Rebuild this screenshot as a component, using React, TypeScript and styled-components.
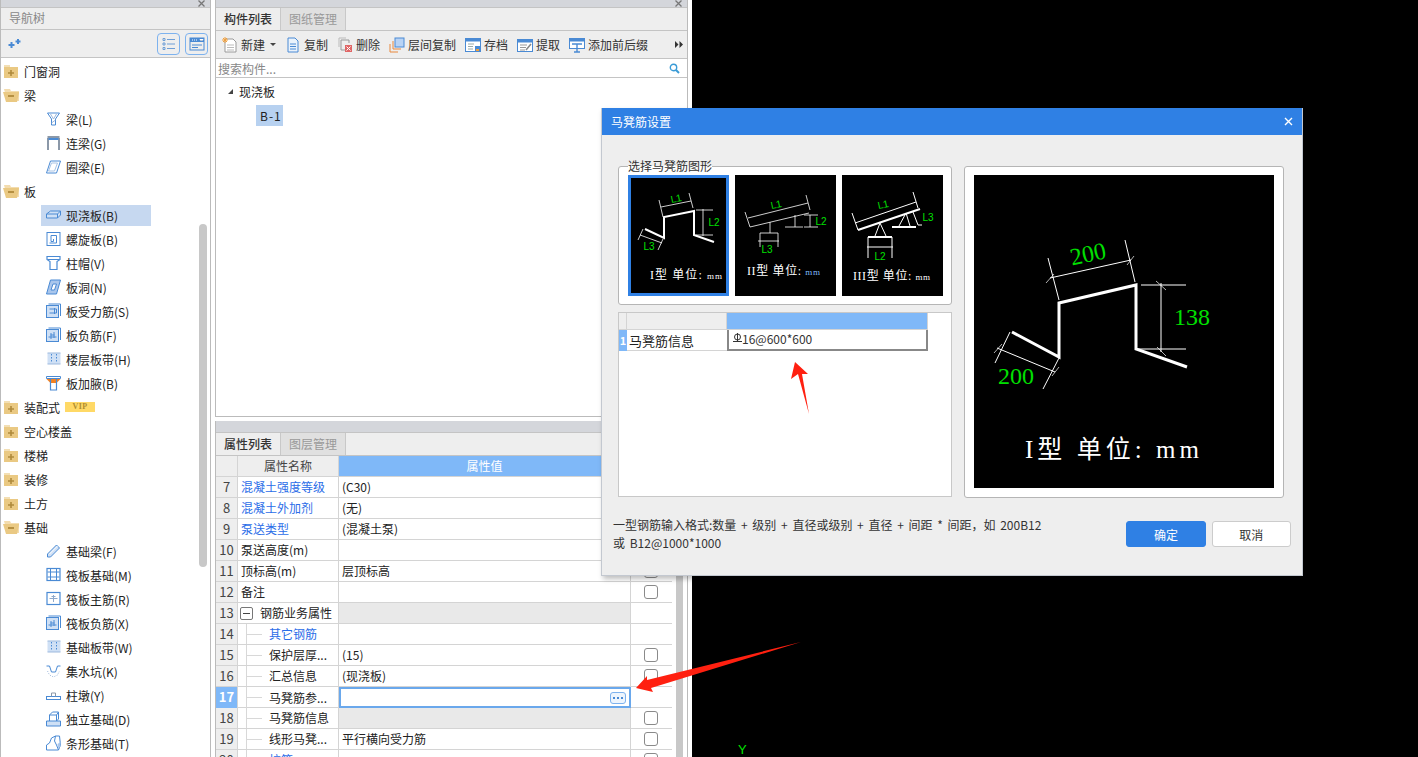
import React from 'react';
import styled, { createGlobalStyle } from 'styled-components';

const GlobalStyle = createGlobalStyle`
  html, body {
    margin: 0;
    height: 757px;
    overflow: hidden;
    background: #000;
  }
  * { box-sizing: border-box; }
  #root {
    font-family: "Noto Sans CJK SC", "Noto Sans", sans-serif;
    font-size: 12px;
    color: #222;
  }
`;

const BLUE = '#4a8ad4';
const PALE = '#cfe0f5';

const Page = styled.div`
  position: relative;
  display: flex;
  width: 1418px;
  height: 757px;
  overflow: hidden;
  background: #fff;
`;

const LeftPanel = styled.div`
  position: relative;
  width: 211px;
  height: 757px;
  border-left: 1px solid #bbb;
  border-right: 1px solid #bbb;
  background: #fff;
  overflow: hidden;
`;

const DragBar = styled.div<{ $h?: number }>`
  display: flex;
  justify-content: flex-end;
  align-items: center;
  height: ${p => (p.$h ?? 7) + 1}px;
  padding-right: 5px;
  background: #d4d6db;
  border-bottom: 1px solid #c4c4c4;
  overflow: hidden;
`;

const PanelTitle = styled.div`
  height: 22px;
  padding-left: 8px;
  line-height: 20px;
  background: #eee;
  border-bottom: 1px solid #c4c4c4;
  color: #888;
`;

const TreeBar = styled.div`
  display: flex;
  align-items: center;
  gap: 5px;
  height: 28px;
  padding: 0 2px 0 7px;
  background: #eee;
  border-bottom: 1px solid #c4c4c4;
`;

const ViewButton = styled.div`
  display: flex;
  align-items: center;
  justify-content: center;
  width: 23px;
  height: 22px;
  border: 1px solid #7db2ee;
  border-radius: 4px;
  &:first-of-type { margin-left: auto; }
`;

const Tree = styled.div`
  padding-top: 1px;
`;

const GroupRow = styled.div`
  display: flex;
  align-items: center;
  gap: 5px;
  height: 24px;
  padding-left: 2px;
  color: #222;
`;

const ChildRow = styled.div`
  display: flex;
  align-items: center;
  height: 24px;
  padding-left: 40px;
`;

const ChildBox = styled.div<{ $active?: boolean }>`
  display: flex;
  align-items: center;
  gap: 4px;
  width: 110px;
  height: 21px;
  padding-left: 4px;
  background: ${p => (p.$active ? '#c6d8f0' : 'transparent')};
  white-space: nowrap;
`;

const VipBadge = styled.span`
  width: 30px;
  height: 10px;
  background: #ffd966;
  color: #b08d2e;
  font: bold 8px/10px "Liberation Serif", serif;
  letter-spacing: 0.5px;
  text-align: center;
`;

const ScrollThumb = styled.div`
  position: absolute;
  left: 198px;
  top: 224px;
  width: 8px;
  height: 343px;
  border-radius: 4px;
  background: #c8c8c8;
`;

const MiddleColumn = styled.div`
  display: flex;
  flex-direction: column;
  width: 473px;
  margin-left: 4px;
  background: #fff;
`;

const UpperPanel = styled.div`
  height: 417px;
  border: 1px solid #bbb;
  border-top: none;
`;

const LowerPanel = styled.div`
  flex: 1;
  margin-top: 4px;
  border-left: 1px solid #bbb;
  border-right: 1px solid #bbb;
  overflow: hidden;
`;

const TabStrip = styled.div`
  display: flex;
  height: 23px;
  background: #eee;
  border-bottom: 1px solid #c4c4c4;
`;

const Tab = styled.div<{ $active?: boolean }>`
  width: 65px;
  text-align: center;
  line-height: 22px;
  font-weight: ${p => (p.$active ? 500 : 400)};
  color: ${p => (p.$active ? '#333' : '#999')};
  background: ${p => (p.$active ? '#eee' : '#e0e0e0')};
  border-right: 1px solid #c8c8c8;
`;

const Toolbar = styled.div`
  display: flex;
  align-items: center;
  gap: 9px;
  height: 28px;
  padding: 0 4px 0 6px;
  background: #eee;
  border-bottom: 1px solid #c4c4c4;
`;

const ToolItem = styled.div`
  display: flex;
  align-items: center;
  gap: 3px;
  color: #333;
  white-space: nowrap;
`;

const Caret = styled.span`
  width: 0;
  height: 0;
  margin-left: 2px;
  border-left: 3px solid transparent;
  border-right: 3px solid transparent;
  border-top: 3px solid #444;
`;

const MoreArrows = styled.svg`
  margin-left: auto;
`;

const SearchBar = styled.div`
  display: flex;
  align-items: center;
  justify-content: space-between;
  height: 19px;
  padding: 0 7px 0 2px;
  border-bottom: 1px solid #c4c4c4;
  color: #888;
`;

const ListTree = styled.div`
  padding-top: 1px;
`;

const ListRow = styled.div`
  display: flex;
  align-items: center;
  gap: 6px;
  height: 24px;
  padding-left: 12px;
`;

const Triangle = styled.span`
  width: 0;
  height: 0;
  border-left: 5px solid transparent;
  border-bottom: 5px solid #444;
`;

const ListLeaf = styled.div`
  display: flex;
  align-items: center;
  width: 27px;
  height: 21px;
  margin: 2px 0 0 40px;
  padding-left: 4px;
  letter-spacing: 1px;
  background: #b7d1f0;
`;

const TableArea = styled.div`
  display: flex;
`;

const Table = styled.div`
  width: 456px;
  flex: none;
`;

const Scrollbar = styled.div`
  width: 7px;
  height: 301px;
  margin-left: 4px;
  background: #c8c8c8;
`;

const TableRow = styled.div`
  display: grid;
  grid-template-columns: 22px 101px 292px 41px;
  height: 21px;
  line-height: 20px;
  border-bottom: 1px solid #d4d4d4;
`;

const NumCell = styled.div<{ $active?: boolean }>`
  text-align: center;
  font-size: 13px;
  font-weight: ${p => (p.$active ? 700 : 400)};
  color: ${p => (p.$active ? '#fff' : '#444')};
  background: ${p => (p.$active ? '#7fb8f8' : '#eee')};
  border-right: 1px solid #d4d4d4;
`;

const HeadCell = styled.div<{ $active?: boolean }>`
  text-align: center;
  color: ${p => (p.$active ? '#fff' : '#444')};
  background: ${p => (p.$active ? '#7fb8f8' : '#eee')};
  border-right: 1px solid #d4d4d4;
`;

const NameCell = styled.div<{ $link?: boolean; $indent?: boolean }>`
  position: relative;
  display: flex;
  align-items: center;
  gap: 7px;
  padding-left: ${p => (p.$indent ? 31 : 3)}px;
  color: ${p => (p.$link ? '#2b6de8' : '#222')};
  border-right: 1px solid #d4d4d4;
  white-space: nowrap;
  overflow: hidden;
  ${p =>
    p.$indent &&
    `
    &::before {
      content: '';
      position: absolute;
      left: 8px;
      top: 0;
      bottom: 0;
      border-left: 1px solid #d8d8d8;
    }
    &::after {
      content: '';
      position: absolute;
      left: 9px;
      top: 10px;
      width: 15px;
      border-top: 1px solid #d8d8d8;
    }
  `}
`;

const MinusBox = styled.span`
  display: flex;
  align-items: center;
  justify-content: center;
  width: 13px;
  height: 13px;
  margin-left: -1px;
  border: 1px solid #777;
  border-radius: 2px;
  &::before {
    content: '';
    width: 7px;
    border-top: 1px solid #444;
  }
`;

const ValueCell = styled.div<{ $shaded?: boolean }>`
  padding-left: 3px;
  background: ${p => (p.$shaded ? '#e9e9e9' : '#fff')};
  border-right: 1px solid #d4d4d4;
  color: #222;
`;

const EditingCell = styled.div`
  display: flex;
  align-items: center;
  justify-content: flex-end;
  height: 21px;
  padding-right: 3px;
  border: 2px solid #6aa8ec;
  background: #fff;
`;

const DotsButton = styled.span`
  display: flex;
  align-items: center;
  justify-content: center;
  gap: 2px;
  width: 16px;
  height: 12px;
  border: 1px solid #7db2ee;
  border-radius: 3px;
  background: #eef5fd;
  i {
    width: 2px;
    height: 2px;
    background: #4a8ad4;
  }
`;

const CheckCell = styled.div`
  display: flex;
  align-items: center;
  justify-content: center;
  padding-right: 1px;
`;

const CheckBox = styled.span`
  width: 14px;
  height: 14px;
  border: 1px solid #8a8a8a;
  border-radius: 3px;
  background: #fff;
`;

const Canvas = styled.div`
  position: relative;
  flex: 1;
  margin-left: 4px;
  background: #000;
`;

const AxisLabel = styled.span`
  position: absolute;
  left: 46px;
  top: 743px;
  color: #00e000;
  font: 13px/14px "Liberation Sans", sans-serif;
`;

const Dialog = styled.div`
  position: absolute;
  left: 601px;
  top: 108px;
  width: 702px;
  height: 468px;
  background: #eee;
  border: 1px solid #c3c8d0;
  border-top: none;
  box-shadow: 2px 3px 5px rgba(0, 0, 0, 0.25);
`;

const DialogTitle = styled.div`
  display: flex;
  align-items: center;
  justify-content: space-between;
  height: 27px;
  padding: 0 9px;
  background: #2f80e4;
  color: #fff;
`;

const DialogBody = styled.div`
  display: flex;
  gap: 12px;
  padding: 31px 0 0 16px;
`;

const DialogLeft = styled.div`
  display: flex;
  flex-direction: column;
  gap: 7px;
  width: 334px;
`;

const GroupBox = styled.div`
  position: relative;
  display: flex;
  gap: 6px;
  height: 139px;
  padding: 8px 9px;
  background: #fff;
  border: 1px solid #b5b5b5;
  border-radius: 3px;
`;

const GroupLegend = styled.span`
  position: absolute;
  left: 9px;
  top: -8px;
  line-height: 14px;
  color: #333;
  background: linear-gradient(#eee 50%, #fff 50%);
`;

const ShapeTile = styled.div<{ $selected?: boolean }>`
  width: 101px;
  height: 121px;
  background: #000;
  border: 3px solid ${p => (p.$selected ? '#2f80e4' : '#000')};
`;

const InfoGrid = styled.div`
  height: 185px;
  background: #fff;
  border: 1px solid #c8c8c8;
`;

const InfoRow = styled.div`
  display: grid;
  grid-template-columns: 8px 100px 201px;
  width: 309px;
`;

const InfoHead = styled.div<{ $blue?: boolean }>`
  height: 17px;
  background: ${p => (p.$blue ? '#7fb8f8' : '#eee')};
  border-right: 1px solid #d4d4d4;
  border-bottom: 1px solid #d4d4d4;
`;

const InfoNum = styled.div`
  height: 21px;
  background: #7fb8f8;
  color: #fff;
  font-size: 11px;
  font-weight: 700;
  line-height: 20px;
  text-align: center;
`;

const InfoName = styled.div`
  height: 21px;
  padding-left: 2px;
  font-size: 13px;
  line-height: 21px;
  border-bottom: 1px solid #d4d4d4;
`;

const InfoValue = styled.div`
  display: flex;
  align-items: center;
  height: 21px;
  padding: 0 0 2px 4px;
  color: #333;
  border: 2px solid #888;
  border-top: none;
`;

const PreviewBox = styled.div`
  width: 320px;
  height: 332px;
  padding: 8px 9px;
  background: #fff;
  border: 1px solid #b5b5b5;
  border-radius: 3px;
`;

const PreviewScreen = styled.svg`
  display: block;
  width: 300px;
  height: 313px;
  background: #000;
`;

const DialogFooter = styled.div`
  display: flex;
  gap: 6px;
  padding: 23px 11px 0 11px;
`;

const HelpText = styled.div`
  width: 511px;
  margin-top: -5px;
  line-height: 18px;
  word-spacing: 2px;
  color: #333;
`;

const DialogButton = styled.div<{ $primary?: boolean }>`
  width: 80px;
  height: 26px;
  line-height: 26px;
  text-align: center;
  border-radius: 3px;
  color: ${p => (p.$primary ? '#fff' : '#333')};
  background: ${p => (p.$primary ? '#2f80e4' : '#fff')};
  border: 1px solid ${p => (p.$primary ? '#2f80e4' : '#ccc')};
`;

const ArrowLayer = styled.svg`
  position: absolute;
  left: 0;
  top: 0;
  width: 1418px;
  height: 757px;
  pointer-events: none;
`;

const FolderClosed = () => (
  <svg width="16" height="14" viewBox="0 0 16 14">
    <path d="M1 1h6v2H1z" fill="#f3dfb4" />
    <rect x="1" y="3" width="14" height="11" fill="#eac983" />
    <path d="M8 6v6M5 9h6" stroke="#b08a3c" strokeWidth="1.6" />
  </svg>
);

const FolderOpen = () => (
  <svg width="16" height="14" viewBox="0 0 16 14">
    <path d="M1 1h6l1 2h8v10H4z" fill="#f3dcae" />
    <path d="M0 4h16v1l-2 9H3z" fill="#eac983" />
    <path d="M5 8h6" stroke="#a98232" strokeWidth="1.6" />
  </svg>
);

const CloseMark = () => (
  <svg width="7" height="7" viewBox="0 0 7 7">
    <path d="M0.500 0.500l6 6M6.500 0.500l-6 6" stroke="#777" strokeWidth="1.300" />
  </svg>
);

const s = { fill: 'none', stroke: BLUE, strokeWidth: 1 };

const icons: Record<string, React.ReactNode> = {
  beam: (
    <>
      <path d="M2 2h12l-4 6v6H6V8z" {...s} />
      <path d="M5 3l3 5 3-5M6 12l4-3" stroke="#9db9dd" fill="none" />
    </>
  ),
  link: (
    <>
      <path d="M2.500 3v12M13.500 3v12" stroke="#8b98a8" strokeWidth="2" />
      <rect x="2" y="1" width="12" height="2" fill="#8b98a8" />
      <rect x="3" y="3" width="10" height="2" fill={BLUE} />
    </>
  ),
  ring: (
    <>
      <path d="M5 2h10l-4 12H1z" {...s} />
      <path d="M6 4h6l-3 8H3z" fill="none" stroke="#a9c4e6" />
    </>
  ),
  slab: (
    <>
      <path d="M1 7l4-3h10v4l-3 3H1z" fill={PALE} stroke={BLUE} />
      <path d="M1 7h11l3-3M12 7v4" {...s} />
    </>
  ),
  spiral: (
    <>
      <rect x="1.500" y="1.500" width="13" height="13" {...s} />
      <path d="M8 8v2.500H5.500V4.500h5.500v7.500H4" {...s} />
    </>
  ),
  cap: (
    <>
      <path d="M1.500 1.500h13v3l-3 2v8h-7v-8l-3-2z" fill="none" stroke={BLUE} strokeWidth="1.200" />
      <path d="M2 4.500h12" {...s} />
    </>
  ),
  hole: (
    <>
      <path d="M5 1h10l-4 14H1z" fill="#a9c6ec" stroke={BLUE} />
      <path d="M7.500 5h3.500L9 11H5.500z" fill="#fff" stroke={BLUE} />
    </>
  ),
  force: (
    <>
      <path d="M3 1h12v12" {...s} />
      <rect x="1" y="2.500" width="12" height="12" fill={PALE} stroke={BLUE} />
      <path d="M4 6h7M4 10h7M9 5v6M11 6v4" {...s} />
    </>
  ),
  negative: (
    <>
      <path d="M3 1h12v12" {...s} />
      <rect x="1" y="2.500" width="12" height="12" fill={PALE} stroke={BLUE} />
      <path d="M3 10h8M5.500 6v6M8.500 5v6M5 8h4" {...s} />
    </>
  ),
  strip: (
    <>
      <rect x="2" y="2" width="13" height="11" fill={PALE} />
      <path d="M2 2h13M2 13h13" stroke="#9db9dd" />
      <path d="M6 3v9M11 3v9" stroke={BLUE} strokeDasharray="1.500 1.500" />
    </>
  ),
  haunch: (
    <>
      <path d="M1 1.500h14v2H1z" fill="none" stroke={BLUE} />
      <path d="M1 4h14l-4 4H5z" fill="#f58220" />
      <path d="M5 4v11h6V4" fill="none" stroke={BLUE} strokeWidth="1.200" />
    </>
  ),
  foundBeam: (
    <>
      <path d="M2 11L11 2l3 3-9 9H2z" fill={PALE} stroke={BLUE} />
      <path d="M4 11l8-8" stroke="#fff" />
    </>
  ),
  raft: (
    <>
      <rect x="1.500" y="1.500" width="13" height="12" fill="none" stroke={BLUE} strokeWidth="1.200" />
      <rect x="5" y="5" width="6" height="5" fill="none" stroke={BLUE} />
      <path d="M2 5h3M11 5h3M2 10h3M11 10h3M5 2v3M11 2v3M5 10v3M11 10v3" stroke={BLUE} />
    </>
  ),
  raftMain: (
    <>
      <rect x="1.500" y="1.500" width="13" height="12" fill="none" stroke={BLUE} strokeWidth="1.200" />
      <path d="M8 4v7M4 7.500h8M6 5.500h4" stroke="#8ea9cc" fill="none" />
    </>
  ),
  pit: (
    <>
      <path d="M1 3h3l2 6h4l2-6h3" {...s} />
      <path d="M2 8l2 4 4 2 4-2 2-4" stroke="#9db9dd" strokeDasharray="1 1.500" fill="none" />
    </>
  ),
  pier: (
    <>
      <rect x="1" y="9.500" width="14" height="3" fill="none" stroke={BLUE} />
      <path d="M6 9.500V6h4v3.500" fill="none" stroke="#8b98a8" />
    </>
  ),
  isolated: (
    <>
      <path d="M1 10h14v5H1z" fill={PALE} stroke={BLUE} />
      <path d="M4 10V4l3-3h6v7l-2 2" fill="none" stroke={BLUE} />
      <path d="M4 4h7v6" fill="none" stroke={BLUE} />
      <path d="M11 4l2-3" stroke={BLUE} />
    </>
  ),
  strip3d: (
    <>
      <path d="M1 15V10l3-2 2-5 4-2h4l1 9-2 5z" fill="none" stroke={BLUE} />
      <path d="M10 1l-1 5 2 4 2 5" fill="none" stroke={BLUE} />
      <path d="M12 9l3-2v4l-2 3z" fill="#a9c6ec" />
    </>
  ),
};

const NavIcon: React.FC<{ name: string }> = ({ name }) => (
  <svg width="17" height="16" viewBox="0 0 16 16" style={{ flex: 'none' }}>
    {icons[name]}
  </svg>
);

const ToolIcon: React.FC<{ children: React.ReactNode }> = ({ children }) => (
  <svg width="16" height="16" viewBox="0 0 16 16">
    {children}
  </svg>
);

type NavNode =
  | { kind: 'group'; label: string; open?: boolean; vip?: boolean }
  | { kind: 'child'; label: string; icon: string; active?: boolean };

const navNodes: NavNode[] = [
  { kind: 'group', label: '门窗洞' },
  { kind: 'group', label: '梁', open: true },
  { kind: 'child', label: '梁(L)', icon: 'beam' },
  { kind: 'child', label: '连梁(G)', icon: 'link' },
  { kind: 'child', label: '圈梁(E)', icon: 'ring' },
  { kind: 'group', label: '板', open: true },
  { kind: 'child', label: '现浇板(B)', icon: 'slab', active: true },
  { kind: 'child', label: '螺旋板(B)', icon: 'spiral' },
  { kind: 'child', label: '柱帽(V)', icon: 'cap' },
  { kind: 'child', label: '板洞(N)', icon: 'hole' },
  { kind: 'child', label: '板受力筋(S)', icon: 'force' },
  { kind: 'child', label: '板负筋(F)', icon: 'negative' },
  { kind: 'child', label: '楼层板带(H)', icon: 'strip' },
  { kind: 'child', label: '板加腋(B)', icon: 'haunch' },
  { kind: 'group', label: '装配式', vip: true },
  { kind: 'group', label: '空心楼盖' },
  { kind: 'group', label: '楼梯' },
  { kind: 'group', label: '装修' },
  { kind: 'group', label: '土方' },
  { kind: 'group', label: '基础', open: true },
  { kind: 'child', label: '基础梁(F)', icon: 'foundBeam' },
  { kind: 'child', label: '筏板基础(M)', icon: 'raft' },
  { kind: 'child', label: '筏板主筋(R)', icon: 'raftMain' },
  { kind: 'child', label: '筏板负筋(X)', icon: 'negative' },
  { kind: 'child', label: '基础板带(W)', icon: 'strip' },
  { kind: 'child', label: '集水坑(K)', icon: 'pit' },
  { kind: 'child', label: '柱墩(Y)', icon: 'pier' },
  { kind: 'child', label: '独立基础(D)', icon: 'isolated' },
  { kind: 'child', label: '条形基础(T)', icon: 'strip3d' },
];

interface PropRow {
  n: number;
  name: string;
  value?: string;
  link?: boolean;
  indent?: boolean;
  shaded?: boolean;
  check?: boolean;
  group?: boolean;
  editing?: boolean;
}

const propRows: PropRow[] = [
  { n: 7, name: '混凝土强度等级', value: '(C30)', link: true, check: true },
  { n: 8, name: '混凝土外加剂', value: '(无)', link: true, check: true },
  { n: 9, name: '泵送类型', value: '(混凝土泵)', link: true, check: true },
  { n: 10, name: '泵送高度(m)', check: true },
  { n: 11, name: '顶标高(m)', value: '层顶标高', check: true },
  { n: 12, name: '备注', check: true },
  { n: 13, name: '钢筋业务属性', group: true, shaded: true },
  { n: 14, name: '其它钢筋', link: true, indent: true },
  { n: 15, name: '保护层厚...', value: '(15)', indent: true, check: true },
  { n: 16, name: '汇总信息', value: '(现浇板)', indent: true, check: true },
  { n: 17, name: '马凳筋参...', indent: true, editing: true },
  { n: 18, name: '马凳筋信息', indent: true, shaded: true, check: true },
  { n: 19, name: '线形马凳...', value: '平行横向受力筋', indent: true, check: true },
  { n: 20, name: '拉筋', link: true, indent: true, check: true },
];

const thin = { stroke: '#fff', strokeWidth: 1, fill: 'none' };
const thick = { stroke: '#fff', strokeWidth: 2, fill: 'none' };
const dimText = { fill: '#00e000', fontFamily: '"Liberation Sans", sans-serif', fontSize: 10, textAnchor: 'middle' as const };
const tileLabel = { fill: '#fff', fontFamily: '"Liberation Serif", "Noto Sans CJK SC", serif', fontSize: 12 };
const previewDim = { fill: '#00e000', fontFamily: '"Liberation Serif", serif', fontSize: 24, textAnchor: 'middle' as const };

const TileOne = () => (
  <svg width="95" height="115" viewBox="3 3 95 115" style={{ display: 'block' }}>
    <path d="M17 54L36 63V42L66 36V60L86 67" {...thick} />
    <path d="M31 25L35 42M61 18L65 33M33 32L63 26M68 35H85M68 60H85M75 34V61M15 54L10 65M35 64L30 75M12 60L34 68" {...thin} strokeWidth={0.8} />
    <text x="48" y="27" {...dimText} transform="rotate(-12 48 23)">L1</text>
    <text x="86" y="51" {...dimText}>L2</text>
    <text x="21" y="75" {...dimText}>L3</text>
    <text x="22" y="104" {...tileLabel} textLength={72}>I型 单位: <tspan fontSize="9">mm</tspan></text>
  </svg>
);

const TileTwo = () => (
  <svg width="95" height="115" viewBox="3 3 95 115" style={{ display: 'block' }}>
    <path d="M10 37L15 52M71 20L75 35M13 43L73 28M15 52L74 38M35 47V58M25 58H43M25 58V72M43 58V72M23 66H44M60 40V52M50 52H68M69 52H83M69 40H83M75 40V52" {...thin} strokeWidth={0.8} />
    <text x="41" y="33" {...dimText} transform="rotate(-12 41 29)">L1</text>
    <text x="86" y="50" {...dimText}>L2</text>
    <text x="32" y="78" {...dimText}>L3</text>
    <text x="12" y="100" {...tileLabel} textLength={73}>II型 单位: <tspan fontSize="9" fill="#7fb8f8">mm</tspan></text>
  </svg>
);

const TileThree = () => (
  <svg width="95" height="115" viewBox="3 3 95 115" style={{ display: 'block' }}>
    <path d="M16 55L78 34M50 52H74M26 62H50" {...thick} />
    <path d="M13 48L74 27M10 38L16 55M71 17L76 33M64 38L57 51M64 38L68 51M38 48L33 61M38 48L44 61M26 62V83M50 62V83M25 72H51M71 37L76 50M76 50H80" {...thin} />
    <text x="41" y="33" {...dimText} transform="rotate(-12 41 29)">L1</text>
    <text x="86" y="46" {...dimText}>L3</text>
    <text x="38" y="85" {...dimText}>L2</text>
    <text x="11" y="105" {...tileLabel} textLength={77}>III型 单位: <tspan fontSize="9">mm</tspan></text>
  </svg>
);

const RebarGlyph = () => (
  <svg width="9" height="11" viewBox="0 0 9 11">
    <circle cx="4.500" cy="4" r="3" fill="none" stroke="#333" />
    <path d="M4.500 0V8M0 8.500H9" stroke="#333" />
  </svg>
);

export default function App() {
  return (
    <Page>
      <GlobalStyle />
      <LeftPanel>
        <DragBar>
          <CloseMark />
        </DragBar>
        <PanelTitle>导航树</PanelTitle>
        <TreeBar>
          <svg width="14" height="12" viewBox="0 0 14 12">
            <path d="M3.500 4v6M0.500 7h6M10 1v5M7.500 3.500h5" stroke={BLUE} strokeWidth="2" />
          </svg>
          <ViewButton>
            <svg width="14" height="14" viewBox="0 0 14 14">
              <path d="M5 2.500h8M5 7h8M5 11.500h8" stroke="#6e9ed6" />
              <path d="M1 1.500h2v2H1zM1 6h2v2H1zM1 10.500h2v2H1z" fill="none" stroke="#6e9ed6" />
            </svg>
          </ViewButton>
          <ViewButton>
            <svg width="16" height="14" viewBox="0 0 16 14">
              <rect x="1" y="1" width="14" height="12" fill="none" stroke={BLUE} />
              <rect x="1" y="1" width="14" height="4" fill={BLUE} />
              <path d="M3 8h10M3 10.500h6" stroke={BLUE} />
              <path d="M3 3h1M5 3h1M7 3h1M11 2.500h3l-1.500 1.500z" stroke="#fff" />
            </svg>
          </ViewButton>
        </TreeBar>
        <Tree>
          {navNodes.map(node =>
            node.kind === 'group' ? (
              <GroupRow key={node.label}>
                {node.open ? <FolderOpen /> : <FolderClosed />}
                <span>{node.label}</span>
                {node.vip && <VipBadge>VIP</VipBadge>}
              </GroupRow>
            ) : (
              <ChildRow key={node.label}>
                <ChildBox $active={node.active}>
                  <NavIcon name={node.icon} />
                  <span>{node.label}</span>
                </ChildBox>
              </ChildRow>
            ),
          )}
        </Tree>
        <ScrollThumb />
      </LeftPanel>

      <MiddleColumn>
        <UpperPanel>
          <DragBar>
            <CloseMark />
          </DragBar>
          <TabStrip>
            <Tab $active>构件列表</Tab>
            <Tab>图纸管理</Tab>
          </TabStrip>
          <Toolbar>
            <ToolItem>
              <ToolIcon>
                <path d="M3 2h8l3 3v10H3z" fill="#fff" stroke="#999" />
                <path d="M5 8h7M5 10.500h7M5 13h7" stroke="#bbb" />
                <path d="M3 0v6M0 3h6M1 1l4 4M5 1l-4 4" stroke="#f2a03c" />
              </ToolIcon>
              新建
              <Caret />
            </ToolItem>
            <ToolItem>
              <ToolIcon>
                <path d="M3 1h7l3 3v11H3z" fill="#eaf2fb" stroke={BLUE} />
                <path d="M5 7h6M5 9.500h6M5 12h6" stroke={BLUE} />
              </ToolIcon>
              复制
            </ToolItem>
            <ToolItem>
              <ToolIcon>
                <path d="M4 3h8v3M4 3v10h4" fill="none" stroke="#999" />
                <path d="M2 1h7M2 1v9" fill="none" stroke="#bbb" />
                <rect x="8" y="8" width="7" height="7" fill="#e06666" />
                <path d="M9.500 9.500l4 4M13.500 9.500l-4 4" stroke="#fff" />
              </ToolIcon>
              删除
            </ToolItem>
            <ToolItem>
              <ToolIcon>
                <rect x="6" y="1" width="9" height="9" fill="#b8d3f5" stroke={BLUE} />
                <path d="M4 4v8h8M1 7v8h8" fill="none" stroke="#e8883c" />
              </ToolIcon>
              层间复制
            </ToolItem>
            <ToolItem>
              <ToolIcon>
                <rect x="0.500" y="1.500" width="15" height="13" fill="#fff" stroke={BLUE} />
                <rect x="0.500" y="1.500" width="15" height="3" fill={BLUE} />
                <path d="M3 7h6M3 9.500h5M3 12h5" stroke="#9aa" />
                <rect x="10" y="9" width="5" height="5" fill={BLUE} />
                <rect x="11" y="12" width="3" height="2" fill="#f2a03c" />
              </ToolIcon>
              存档
            </ToolItem>
            <ToolItem>
              <ToolIcon>
                <rect x="0.500" y="2.500" width="15" height="12" fill="#fff" stroke={BLUE} />
                <rect x="0.500" y="2.500" width="15" height="3" fill={BLUE} />
                <path d="M3 8h7M3 10.500h6M3 13h5" stroke="#999" />
                <path d="M9 13l5-6" stroke="#888" strokeWidth="1.500" />
              </ToolIcon>
              提取
            </ToolItem>
            <ToolItem>
              <ToolIcon>
                <rect x="0.500" y="1.500" width="15" height="10" fill="#fff" stroke={BLUE} />
                <rect x="0.500" y="1.500" width="15" height="3" fill={BLUE} />
                <path d="M3 7h10M8 7v8M5 15h6" stroke={BLUE} strokeWidth="1.400" />
              </ToolIcon>
              添加前后缀
            </ToolItem>
            <MoreArrows width="8" height="7" viewBox="0 0 8 7">
              <path d="M0 0l3.500 3.500L0 7zM4.500 0L8 3.500 4.500 7z" fill="#333" />
            </MoreArrows>
          </Toolbar>
          <SearchBar>
            搜索构件...
            <svg width="11" height="11" viewBox="0 0 11 11">
              <circle cx="4.500" cy="4.500" r="3.200" fill="none" stroke="#3a9bd6" strokeWidth="1.400" />
              <path d="M7 7l3 3" stroke="#3a9bd6" strokeWidth="2" />
            </svg>
          </SearchBar>
          <ListTree>
            <ListRow>
              <Triangle />
              <span>现浇板</span>
            </ListRow>
            <ListLeaf>B-1</ListLeaf>
          </ListTree>
        </UpperPanel>

        <LowerPanel>
          <DragBar $h={11} />
          <TabStrip>
            <Tab $active>属性列表</Tab>
            <Tab>图层管理</Tab>
          </TabStrip>
          <TableArea>
            <Table>
              <TableRow>
                <HeadCell />
                <HeadCell>属性名称</HeadCell>
                <HeadCell $active>属性值</HeadCell>
                <HeadCell />
              </TableRow>
              {propRows.map(row => (
                <TableRow key={row.n}>
                  <NumCell $active={row.editing}>{row.n}</NumCell>
                  <NameCell $link={row.link} $indent={row.indent}>
                    {row.group && <MinusBox />}
                    {row.name}
                  </NameCell>
                  {row.editing ? (
                    <EditingCell>
                      <DotsButton>
                        <i />
                        <i />
                        <i />
                      </DotsButton>
                    </EditingCell>
                  ) : (
                    <ValueCell $shaded={row.shaded}>{row.value}</ValueCell>
                  )}
                  <CheckCell>{row.check && <CheckBox />}</CheckCell>
                </TableRow>
              ))}
            </Table>
            <Scrollbar />
          </TableArea>
        </LowerPanel>
      </MiddleColumn>

      <Canvas>
        <AxisLabel>Y</AxisLabel>
      </Canvas>

      <Dialog>
        <DialogTitle>
          马凳筋设置
          <svg width="9" height="9" viewBox="0 0 9 9">
            <path d="M1 1l7 7M8 1L1 8" stroke="#fff" strokeWidth="1.400" />
          </svg>
        </DialogTitle>
        <DialogBody>
          <DialogLeft>
            <GroupBox>
              <GroupLegend>选择马凳筋图形</GroupLegend>
              <ShapeTile $selected>
                <TileOne />
              </ShapeTile>
              <ShapeTile>
                <TileTwo />
              </ShapeTile>
              <ShapeTile>
                <TileThree />
              </ShapeTile>
            </GroupBox>
            <InfoGrid>
              <InfoRow>
                <InfoHead />
                <InfoHead />
                <InfoHead $blue />
              </InfoRow>
              <InfoRow>
                <InfoNum>1</InfoNum>
                <InfoName>马凳筋信息</InfoName>
                <InfoValue>
                  <RebarGlyph />
                  16@600*600
                </InfoValue>
              </InfoRow>
            </InfoGrid>
          </DialogLeft>
          <PreviewBox>
            <PreviewScreen viewBox="0 0 300 313">
              <path d="M38 157L85 182V128L162 110V174L213 192" stroke="#fff" strokeWidth="3" fill="none" />
              <path d="M74 83L85 125M151 65L161 107M76 103L157 85M167 110H212M163 174H212M187 108V177M36 157L21 188M85 183L69 214M23 173L81 197" {...thin} />
              <path d="M72 108L80 99M153 90L160 81M182 106L192 115M183 172L192 181M20 178L28 169M78 201L85 192" {...thin} strokeWidth={0.7} />
              <text x="114" y="87" {...previewDim} transform="rotate(-12 114 79)">200</text>
              <text x="218" y="150" {...previewDim}>138</text>
              <text x="42" y="209" {...previewDim}>200</text>
              <text x="51" y="283" fill="#fff" fontFamily='"Liberation Serif", "Noto Sans CJK SC", serif' fontSize="25" textLength={174}>I型 单位: mm</text>
            </PreviewScreen>
          </PreviewBox>
        </DialogBody>
        <DialogFooter>
          <HelpText>
            一型钢筋输入格式:数量 + 级别 + 直径或级别 + 直径 + 间距 * 间距，如 200B12
            <br />
            或 B12@1000*1000
          </HelpText>
          <DialogButton $primary>确定</DialogButton>
          <DialogButton>取消</DialogButton>
        </DialogFooter>
      </Dialog>

      <ArrowLayer viewBox="0 0 1418 757">
        <path d="M636 688L647 676L647 680L801 642L651 688L653 692Z" fill="#ff2010" />
        <path d="M795 362L808 374L802 374L809 414L798 374L791 379Z" fill="#ff2010" />
      </ArrowLayer>
    </Page>
  );
}
